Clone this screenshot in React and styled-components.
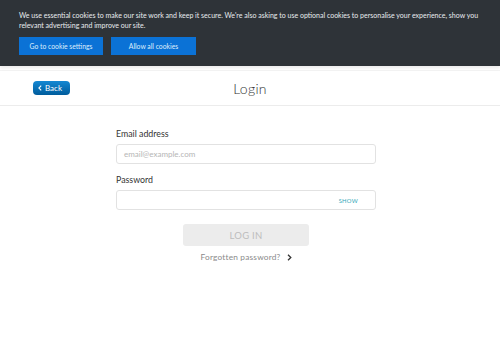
import React from "react";
import styled, { createGlobalStyle } from "styled-components";

const Global = createGlobalStyle`
  html, body { margin: 0; padding: 0; background: #fff; }
  body { font-family: Lato, "Noto Sans", sans-serif; }
  * { box-sizing: border-box; }
`;

const Page = styled.div`
  width: 500px;
  height: 348px;
  overflow: hidden;
  background: #fff;
`;

const Banner = styled.div`
  background: #2e3338;
  height: 66px;
  padding: 10px 19px 0;
  box-shadow: 0 2px 3px rgba(0,0,0,0.08);
  position: relative;
  z-index: 1;
`;

const BannerText = styled.p`
  margin: 0;
  color: #e9ecef;
  font-size: 7px;
  line-height: 10px;
  letter-spacing: 0;
`;

const BannerActions = styled.div`
  display: flex;
  gap: 8px;
  margin-top: 7px;
`;

const BannerButton = styled.button`
  width: ${p => p.$w}px;
  height: 18px;
  border: 0;
  background: #0b72d6;
  color: #dfeefc;
  font-family: inherit;
  font-size: 6.8px;
  padding: 0;
`;

const Header = styled.div`
  margin-top: 4px;
  height: 36px;
  border-bottom: 1px solid #ececec;
  border-top: 1px solid #f3f3f3;
  display: grid;
  grid-template-columns: 1fr auto 1fr;
  align-items: center;
  padding: 0 33px;
`;

const BackButton = styled.button`
  justify-self: start;
  display: flex;
  align-items: center;
  gap: 3px;
  height: 14px;
  width: 37px;
  padding: 0 0 0 5px;
  border: 0;
  border-radius: 4px;
  background: linear-gradient(#1588d3, #005c9c);
  color: #fff;
  font-family: inherit;
  font-size: 8px;
`;

const Title = styled.h1`
  margin: 0;
  font-weight: 300;
  font-size: 14px;
  color: #333;
  letter-spacing: 0.3px;
`;

const Form = styled.div`
  width: 260px;
  margin: 22px auto 0 116px;
  display: flex;
  flex-direction: column;
`;

const Label = styled.label`
  font-size: 8.8px;
  color: #333;
  margin-bottom: 5px;
  line-height: 11px;
`;

const Field = styled.div`
  height: 20px;
  border: 1px solid #e2e2e2;
  border-radius: 3px;
  display: flex;
  align-items: center;
  justify-content: space-between;
  padding: 0 17px 0 7px;
  margin-bottom: ${p => p.$mb || 0}px;
  font-size: 8px;
  color: #b5b5b5;
`;

const Show = styled.span`
  font-size: 5.8px;
  color: #2fa6b7;
  letter-spacing: 0.3px;
`;

const LoginButton = styled.button`
  align-self: center;
  margin: 14px 0 0 0;
  width: 126px;
  height: 22px;
  border: 0;
  border-radius: 3px;
  background: #ececec;
  color: #bdbdbd;
  font-family: inherit;
  font-size: 9.5px;
  letter-spacing: 0.3px;
`;

const Forgot = styled.a`
  align-self: center;
  margin-top: 6px;
  display: flex;
  align-items: center;
  gap: 6px;
  font-size: 8.3px;
  color: #8a8a8a;
  letter-spacing: 0.2px;
`;

export default function App() {
  return (
    <Page>
      <Global />
      <Banner>
        <BannerText>
          We use essential cookies to make our site work and keep it secure. We're also asking to use optional cookies to personalise your experience, show you relevant advertising and improve our site.
        </BannerText>
        <BannerActions>
          <BannerButton $w={84}>Go to cookie settings</BannerButton>
          <BannerButton $w={85}>Allow all cookies</BannerButton>
        </BannerActions>
      </Banner>
      <Header>
        <BackButton>
          <svg width="4" height="6" viewBox="0 0 4 6"><path d="M3.2 0.6 L0.9 3 L3.2 5.4" stroke="#fff" strokeWidth="1.1" fill="none" /></svg>
          Back
        </BackButton>
        <Title>Login</Title>
        <span />
      </Header>
      <Form>
        <Label>Email address</Label>
        <Field $mb={10}>email@example.com</Field>
        <Label>Password</Label>
        <Field>
          <span />
          <Show>SHOW</Show>
        </Field>
        <LoginButton>LOG IN</LoginButton>
        <Forgot>
          Forgotten password?
          <svg width="5" height="7" viewBox="0 0 5 7"><path d="M1 0.8 L3.8 3.5 L1 6.2" stroke="#333" strokeWidth="1.3" fill="none" /></svg>
        </Forgot>
      </Form>
    </Page>
  );
}
